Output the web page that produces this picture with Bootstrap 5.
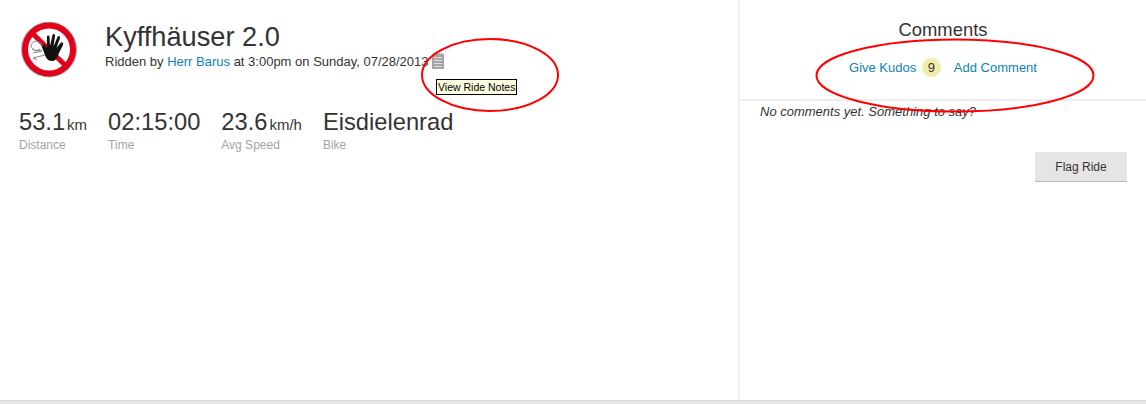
<!DOCTYPE html>
<html lang="en">
<head>
  <meta charset="UTF-8">
  <title>Kyffhäuser 2.0</title>
  <link rel="stylesheet" href="https://cdn.jsdelivr.net/npm/bootstrap@5.3.2/dist/css/bootstrap.min.css">
  <style>
    html, body { height: 404px; overflow: hidden; }
    body { font-family: "Liberation Sans", Arial, sans-serif; color: #333; background: #fff; position: relative; }
    a { color: #0f7fb5; text-decoration: none; }
    .ride-page { height: 400px; }
    .ride-main { width: 739px; padding: 22px 0 0 19px; flex: none; }
    .ride-side { width: 408px; border-left: 2px solid #eee; margin-left: -1px; }
    .ride-logo { width: 60px; height: 56px; margin-right: 26px; flex: none; }
    .ride-title { font-size: 27.200px; line-height: 30px; font-weight: 400; margin: 0; }
    .ride-by { font-size: 13px; line-height: 18px; margin-top: 1px; white-space: nowrap; }
    .notes-icon { width: 12px; height: 16px; margin-left: 3px; vertical-align: -3px; }
    .note-tip { position: absolute; left: 436px; top: 79px; background: #ffffe1; border: 1px solid #000; color: #000; font-size: 10.500px; line-height: 14px; padding: 0 1px; white-space: nowrap; }
    .ride-stats { margin-top: 30px; }
    .stat-val { font-size: 23.700px; line-height: 28px; height: 28px; white-space: nowrap; }
    .stat-val span { font-size: 15px; margin-left: 2px; line-height: 14px; }
    .stat-lbl { font-size: 12px; line-height: 16px; color: #a3a3a3; margin-top: 1px; }
    .stat-time { margin-left: 21px; }
    .stat-speed { margin-left: 21px; }
    .stat-bike { margin-left: 21px; }
    .side-head { height: 81px; border-bottom: 2px solid #eee; margin-top: 20px; text-align: center; }
    .side-title { font-size: 18.400px; line-height: 20px; font-weight: 400; margin: 0; }
    .side-links { font-size: 13px; line-height: 20px; margin-top: 18px; }
    .kudo-count { display: inline-block; width: 19px; height: 19px; line-height: 19px; border-radius: 50%; background: #eeeeaa; color: #333; font-size: 13px; margin: 0 13px 0 2px; }
    .no-comments { font-size: 13px; font-style: italic; line-height: 18px; margin: 2px 0 0 20px; }
    .flag-row { margin-top: 31px; padding-right: 19px; }
    .flag-btn { width: 92px; height: 30px; background: #e5e5e5; border: 0; border-bottom: 1px solid #bbb; border-radius: 0; color: #333; font-size: 12px; padding: 0; }
    .page-foot { height: 4px; background: #e5e5e5; border-top: 1px solid #d8d8d8; }
    .rings { position: absolute; left: 0; top: 0; pointer-events: none; }
  </style>
</head>
<body>
  <div class="ride-page d-flex">
    <div class="ride-main">
      <div class="d-flex">
        <svg class="ride-logo" viewBox="0 0 60 56">
          <circle cx="30" cy="27.500" r="28" fill="#a8a8a8"/>
          <circle cx="30" cy="27.500" r="27" fill="#e2001a"/>
          <circle cx="30" cy="27.500" r="21" fill="#fff"/>
          <path d="M11.500 13 L15 9.500 L48.500 42 L45 45.500 Z" fill="#e2001a"/>
          <path d="M33 39 C29 39 27 36 26 33 L22.500 24 C22 22 24 21 25.500 23 L28 26 L28 15 C28 13 30.500 13 30.500 15 L31 24 L33.500 13 C34 11 36.500 12 36 14 L34.500 24.500 L38.500 15 C39 13 41.500 14 41 16 L37.500 26 L41.500 21 C43 19 45 21 44 23 L39 33 C37.500 37 36 39 33 39 Z" fill="#111"/>
          <path d="M23 28 C19 30 13 28 12 24 C12 20 17 18 20 20 L24 24 M13 27 L17 29 L21 27 M14 31 L23 29 M18 38 L14 36 L26 33" fill="none" stroke="#888" stroke-width="1"/>
        </svg>
        <div>
          <h1 class="ride-title">Kyffhäuser 2.0</h1>
          <div class="ride-by">Ridden by <a href="#">Herr Barus</a> at 3:00pm on Sunday, 07/28/2013<svg class="notes-icon" viewBox="0 0 12 16"><rect x="0" y="1" width="12" height="15" fill="#a6a6a6"/><path d="M1 0h1v2H1zM3 0h1v2H3zM5 0h1v2H5zM7 0h1v2H7zM9 0h1v2H9z" fill="#a6a6a6"/><path d="M2 4.500h8M2 7.500h8M2 10.500h8M2 13.500h8" stroke="#ddd" stroke-width="1"/></svg></div>
        </div>
      </div>
      <div class="ride-stats d-flex">
        <div><div class="stat-val">53.1<span>km</span></div><div class="stat-lbl">Distance</div></div>
        <div class="stat-time"><div class="stat-val">02:15:00</div><div class="stat-lbl">Time</div></div>
        <div class="stat-speed"><div class="stat-val">23.6<span>km/h</span></div><div class="stat-lbl">Avg Speed</div></div>
        <div class="stat-bike"><div class="stat-val">Eisdielenrad</div><div class="stat-lbl">Bike</div></div>
      </div>
    </div>
    <div class="ride-side">
      <div class="side-head">
        <h2 class="side-title">Comments</h2>
        <div class="side-links"><a href="#">Give Kudos</a> <span class="kudo-count">9</span><a href="#">Add Comment</a></div>
      </div>
      <div class="no-comments">No comments yet. Something to say?</div>
      <div class="flag-row d-flex justify-content-end">
        <button type="button" class="btn flag-btn">Flag Ride</button>
      </div>
    </div>
  </div>
  <div class="page-foot"></div>
  <div class="note-tip">View Ride Notes</div>
  <svg class="rings" width="1146" height="404">
    <ellipse cx="490" cy="75" rx="68" ry="36" fill="none" stroke="#f00" stroke-width="2"/>
    <ellipse cx="955" cy="75.500" rx="138.500" ry="36" fill="none" stroke="#f00" stroke-width="2"/>
  </svg>
</body>
</html>
